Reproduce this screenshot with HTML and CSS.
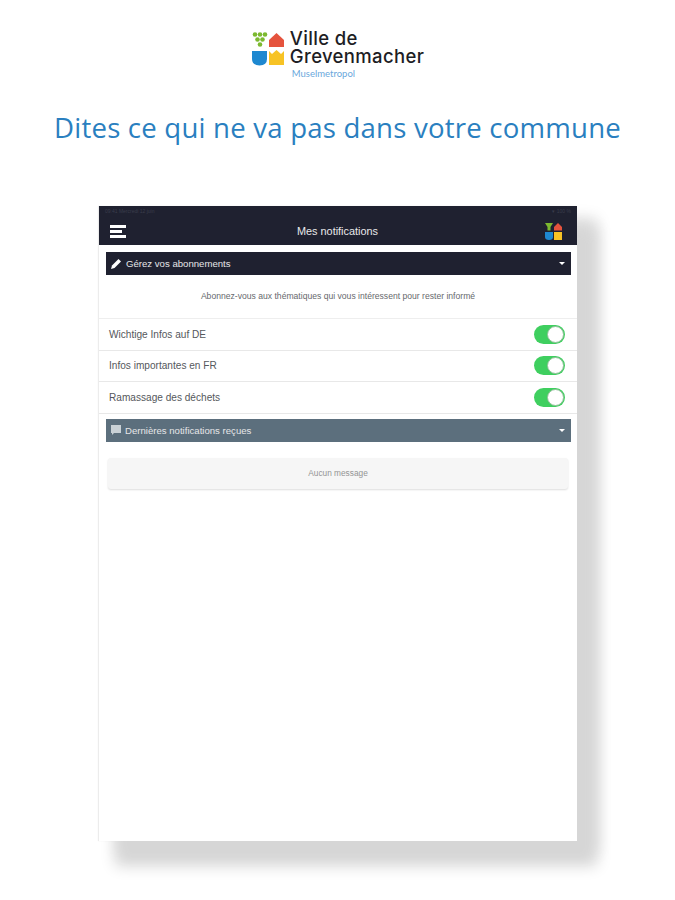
FILE: index.html
```html
<!DOCTYPE html>
<html lang="fr">
<head>
<meta charset="UTF-8" />
<title>Ville de Grevenmacher</title>
<link rel="stylesheet" href="styles.css">
</head>
<body>

<div class="logo">
  <svg class="logo-mark" width="33" height="34" viewBox="0 0 33 34">
    <g fill="#7cb92f">
      <circle cx="3" cy="2.500" r="2.300"/><circle cx="8" cy="2.500" r="2.300"/><circle cx="13" cy="2.500" r="2.300"/>
      <circle cx="5.500" cy="7.500" r="2.300"/><circle cx="10.500" cy="7.500" r="2.300"/>
      <circle cx="8" cy="12.500" r="2.300"/>
    </g>
    <path d="M17 8 L24.500 1 L32 8 V15 H17 Z" fill="#e5533d"/>
    <path d="M0 19 H15 V27 Q15 33 7.500 33.500 Q0 33 0 27 Z" fill="#1e88d0"/>
    <path d="M17 19 L20 22 L24.500 18 L29 22 L32 19 V33 H17 Z" fill="#f7c325"/>
  </svg>
  <div class="logo-text">
    <div class="logo-name">Ville de<br>Grevenmacher</div>
    <div class="logo-sub">Muselmetropol</div>
  </div>
</div>

<h1 class="headline">Dites ce qui ne va pas dans votre commune</h1>

<div class="tablet">
  <div class="statusbar">
    <span>09:41 Mercredi 12 juin</span>
    <span>▾ 100 %</span>
  </div>
  <div class="navbar">
    <div class="burger"><i></i><i class="short"></i><i></i></div>
    <div class="nav-title">Mes notifications</div>
    <svg width="17" height="17" viewBox="0 0 17 17">
      <path d="M0 0 H8 L5.500 4 V7.500 H2.500 V4 Z" fill="#7cb92f"/>
      <path d="M9 4 L13 0 L17 4 V7.500 H9 Z" fill="#e5533d"/>
      <path d="M0 9 H8 V14 Q8 17 4 17 Q0 17 0 14 Z" fill="#1e88d0"/>
      <rect x="9" y="9" width="8" height="8" fill="#f7c325"/>
    </svg>
  </div>

  <div class="bar bar-dark">
    <svg width="11" height="11" viewBox="0 0 11 11"><path d="M0 11 L1 7.500 L7.500 1 L10 3.500 L3.500 10 Z" fill="#fff"/></svg>
    <span class="bar-label">Gérez vos abonnements</span>
    <span class="caret"></span>
  </div>

  <p class="intro">Abonnez-vous aux thématiques qui vous intéressent pour rester informé</p>

  <div class="topics">
    <div class="topic"><span>Wichtige Infos auf DE</span><span class="toggle"></span></div>
    <div class="topic"><span>Infos importantes en FR</span><span class="toggle"></span></div>
    <div class="topic"><span>Ramassage des déchets</span><span class="toggle"></span></div>
  </div>

  <div class="bar bar-slate">
    <svg width="10" height="10" viewBox="0 0 10 10"><path d="M0 0 H10 V8 H3 L1 10 V8 H0 Z" fill="#c9d1d6"/></svg>
    <span class="bar-label">Dernières notifications reçues</span>
    <span class="caret"></span>
  </div>

  <div class="empty">Aucun message</div>
</div>

</body>
</html>
```

FILE: styles.css
```css
body {
  margin: 0;
  height: 900px;
  overflow: hidden;
  background: #fff;
  font-family: "Liberation Sans", Arial, sans-serif;
  display: flex;
  flex-direction: column;
  align-items: center;
}
.logo {
  display: flex;
  gap: 5px;
  margin-top: 29px;
  margin-left: 1px;
}
.logo-mark {
  margin-top: 3px;
}
.logo-name {
  font-family: "Inter", sans-serif;
  font-size: 18.5px;
  line-height: 18px;
  font-weight: 500;
  letter-spacing: 0.35px;
  color: #1d1d24;
}
.logo-sub {
  font-family: "Lato", sans-serif;
  font-size: 9.500px;
  line-height: 12px;
  margin-top: 3px;
  margin-left: 2px;
  color: #6aa8dc;
}
.headline {
  margin: 28px 0 0;
  font-family: "Open Sans", sans-serif;
  font-size: 27.6px;
  line-height: 38px;
  font-weight: 400;
  letter-spacing: 0.2px;
  white-space: nowrap;
  color: #2a7fc0;
}
.tablet {
  width: 478px;
  height: 635px;
  margin-top: 60px;
  margin-left: 1px;
  background: #fff;
  box-shadow: 18px 23px 14px 2px #d6d6d6, 20px 12px 14px 0 #dedede, -1px 0 1px #ececec;
  display: flex;
  flex-direction: column;
}
.statusbar {
  height: 11px;
  background: #1f2130;
  color: #3a3d4c;
  font-size: 5px;
  line-height: 11px;
  padding: 0 6px;
  display: flex;
  justify-content: space-between;
}
.navbar {
  height: 28px;
  background: #1f2130;
  color: #fff;
  padding: 0 15px 0 11px;
  display: flex;
  align-items: center;
  justify-content: space-between;
}
.burger {
  width: 16px;
  display: flex;
  flex-direction: column;
  gap: 2px;
}
.burger i {
  display: block;
  height: 3px;
  background: #fff;
}
.burger i.short {
  width: 12px;
}
.nav-title {
  font-size: 10.900px;
  margin-left: 4px;
  color: #e8e8ea;
}
.bar {
  height: 23px;
  margin: 7px 6px 0 7px;
  padding: 0 6px 0 5px;
  color: #e6e6e8;
  font-size: 9.600px;
  display: flex;
  align-items: center;
  gap: 4px;
}
.bar-dark {
  background: #1f2130;
}
.bar-slate {
  background: #5c6f7d;
  margin-top: 5px;
}
.bar-label {
  flex: 1;
}
.caret {
  width: 0;
  height: 0;
  border-left: 3px solid transparent;
  border-right: 3px solid transparent;
  border-top: 3px solid #fff;
}
.intro {
  margin: 0;
  height: 43px;
  line-height: 43px;
  text-align: center;
  font-size: 8.600px;
  color: #66696d;
  border-bottom: 1px solid #eee;
}
.topic {
  height: 30.5px;
  padding: 0 12px 0 10px;
  font-size: 10.100px;
  color: #55585c;
  display: flex;
  align-items: center;
  justify-content: space-between;
  border-bottom: 1px solid #e8e8e8;
}
.toggle {
  width: 31px;
  height: 19px;
  border-radius: 10px;
  background: #3fcf5f;
  display: flex;
  justify-content: flex-end;
}
.toggle::after {
  content: "";
  width: 15px;
  height: 15px;
  margin: 1px;
  border-radius: 50%;
  background: #fff;
  border: 1px solid #8fbf98;
}
.empty {
  height: 31px;
  margin: 16px 9px 0;
  border-radius: 3px;
  background: #f6f6f6;
  box-shadow: 0 1px 2px #ddd;
  color: #949494;
  font-size: 8.300px;
  line-height: 31px;
  text-align: center;
}
```
